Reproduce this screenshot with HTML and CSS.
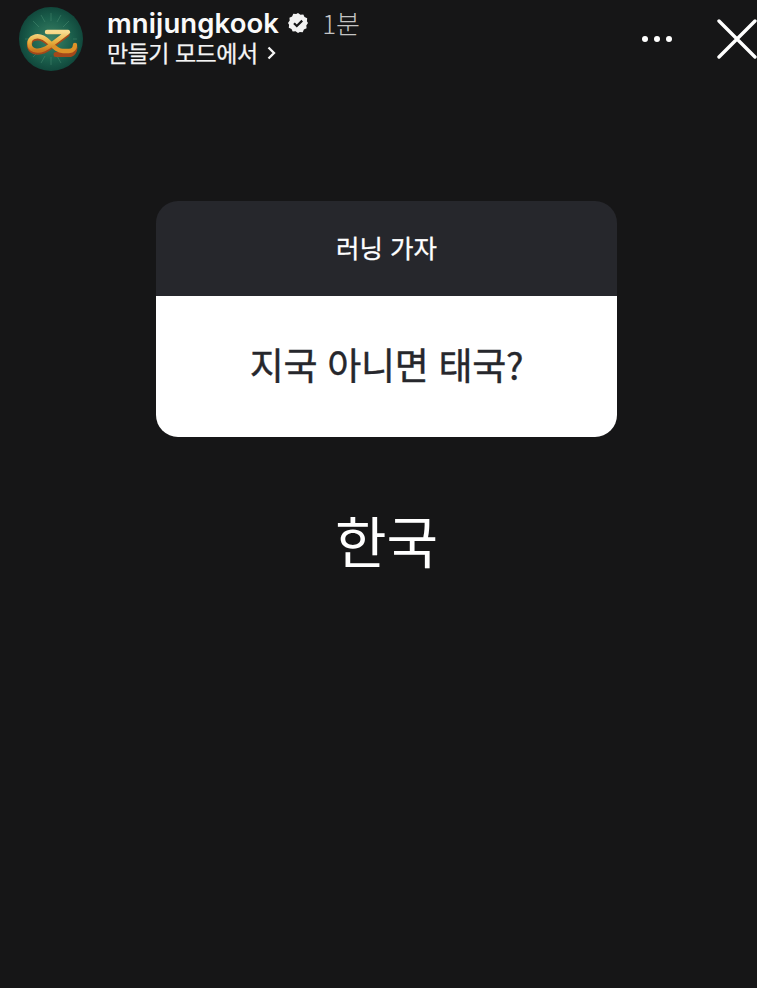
FILE: index.html
```html
<!DOCTYPE html>
<html lang="ko">
<head>
<meta charset="utf-8">
<title>mnijungkook</title>
<link rel="stylesheet" href="styles.css">
</head>
<body>
<main class="story">
  <header class="top">
    <svg class="avatar" viewBox="0 0 64 64" aria-hidden="true">
      <defs>
        <radialGradient id="bg" cx="50%" cy="50%" r="50%">
          <stop offset="0" stop-color="#3d8366"/>
          <stop offset="0.65" stop-color="#1b5f4c"/>
          <stop offset="1" stop-color="#11483c"/>
        </radialGradient>
        <linearGradient id="gold" x1="0" y1="0" x2="0" y2="1">
          <stop offset="0" stop-color="#f8dc90"/>
          <stop offset="0.55" stop-color="#e8ae3c"/>
          <stop offset="1" stop-color="#c9791f"/>
        </linearGradient>
      </defs>
      <circle cx="32" cy="32" r="32" fill="url(#bg)"/>
      <path d="M32 6V14M32 50V58M6 32H10M54 32H58M14 14L20 20M50 14L44 20M14 50L20 44M50 50L44 44M22 8L26 15M42 8L38 15M22 56L26 49M42 56L38 49" stroke="#4f9276" stroke-width="1" opacity=".45"/>
      <path d="M31 36C26 31 20 28 15 30C9 32 9 41 15 43C21 45 27 42 32 38L48 26M37 46H50C54 46 56 42 56 39" fill="none" stroke="#a4481a" stroke-width="5" stroke-linecap="round" transform="translate(0 1.6)"/>
      <path d="M32 37C36 41 39 44 44 44H50C54 44 56 41 56 38" fill="none" stroke="#dd9228" stroke-width="4.4" stroke-linecap="round"/>
      <path d="M31 36C26 31 20 28 15 30C9 32 9 41 15 43C21 45 27 42 32 38L49 25H28" fill="none" stroke="url(#gold)" stroke-width="4.4" stroke-linecap="round" stroke-linejoin="round"/>
    </svg>
    <div class="meta">
      <div class="line">
        <span class="name">mnijungkook</span>
        <svg class="badge" viewBox="0 0 20 20" aria-hidden="true">
          <path d="M10 0l2.4 1.7 2.9-.3 1.2 2.7 2.7 1.2-.3 2.9L20 10l-1.7 2.4.3 2.9-2.7 1.2-1.2 2.7-2.9-.3L10 20l-2.4-1.7-2.9.3-1.2-2.7-2.7-1.2.3-2.9L0 10l1.7-2.4-.3-2.9 2.7-1.2 1.2-2.7 2.9.3z" fill="#f2f2f2"/>
          <path d="M6 10.2l2.8 2.8L14.2 7.6" fill="none" stroke="#161617" stroke-width="2.2"/>
        </svg>
        <span class="time">1분</span>
      </div>
      <div class="sub">
        <span>만들기 모드에서</span>
        <svg class="chev" viewBox="0 0 9 14" aria-hidden="true">
          <path d="M1.5 1.5L7 7L1.5 12.5" fill="none" stroke="#f5f5f5" stroke-width="2.3"/>
        </svg>
      </div>
    </div>
    <div class="actions">
      <div class="dots"><i></i><i></i><i></i></div>
      <svg class="close" viewBox="0 0 40 40" aria-hidden="true">
        <path d="M2 2L38 38M38 2L2 38" fill="none" stroke="#fff" stroke-width="3.4" stroke-linecap="round"/>
      </svg>
    </div>
  </header>

  <section class="card">
    <div class="card-head">러닝 가자</div>
    <div class="card-body">지국 아니면 태국?</div>
  </section>

  <p class="answer">한국</p>
</main>
</body>
</html>
```

FILE: styles.css
```css
* { box-sizing: border-box; }
html, body { margin: 0; padding: 0; }
body {
  background: #161617;
  color: #fff;
  font-family: "Noto Sans CJK KR", "Inter", sans-serif;
  overflow: hidden;
}
.story {
  width: 757px;
  height: 988px;
  display: flex;
  flex-direction: column;
  align-items: center;
}
.top {
  width: 100%;
  height: 78px;
  padding: 7px 0 0 19px;
  display: flex;
  align-items: flex-start;
}
.avatar { width: 64px; height: 64px; flex: none; }
.meta {
  margin-left: 24px;
  display: flex;
  flex-direction: column;
}
.line {
  display: flex;
  align-items: center;
  height: 30px;
  margin-top: 1px;
}
.name {
  font-family: "Inter", sans-serif;
  font-size: 27.5px;
  font-weight: 600;
  letter-spacing: 0.1px;
  line-height: 30px;
  color: #fafafa;
}
.badge { width: 20px; height: 20px; margin-left: 9px; flex: none; }
.time {
  margin-left: 14px;
  font-size: 26px;
  font-weight: 300;
  line-height: 30px;
  color: #c4c4c4;
}
.sub {
  display: flex;
  align-items: center;
  height: 28px;
  font-size: 23px;
  font-weight: 400;
  line-height: 28px;
  letter-spacing: -0.5px;
  -webkit-text-stroke: 0.25px #f5f5f5;
  color: #f5f5f5;
}
.chev { width: 9px; height: 14px; margin-left: 9px; flex: none; margin-top: 2px; }
.actions {
  margin-left: auto;
  display: flex;
  align-items: center;
  height: 64px;
}
.dots { display: flex; gap: 6px; margin-right: 1px; }
.dots i {
  width: 6px;
  height: 6px;
  border-radius: 50%;
  background: #fff;
}
.close { width: 40px; height: 40px; margin-left: 44px; flex: none; }
.card {
  width: 461px;
  margin: 123px 0 0 16px;
  border-radius: 22px;
  overflow: hidden;
}
.card-head {
  height: 95px;
  padding-bottom: 4px;
  background: #26272c;
  display: flex;
  align-items: center;
  justify-content: center;
  font-size: 25.5px;
  font-weight: 400;
  -webkit-text-stroke: 0.3px #fff;
  color: #fff;
}
.card-body {
  height: 141px;
  padding-bottom: 5px;
  background: #fff;
  display: flex;
  align-items: center;
  justify-content: center;
  font-size: 37px;
  font-weight: 400;
  letter-spacing: -0.3px;
  -webkit-text-stroke: 0.4px #26272c;
  color: #26272c;
}
.answer {
  margin: 62px 0 0 16px;
  font-size: 56px;
  font-weight: 400;
  line-height: 80px;
  color: #fff;
}
```
